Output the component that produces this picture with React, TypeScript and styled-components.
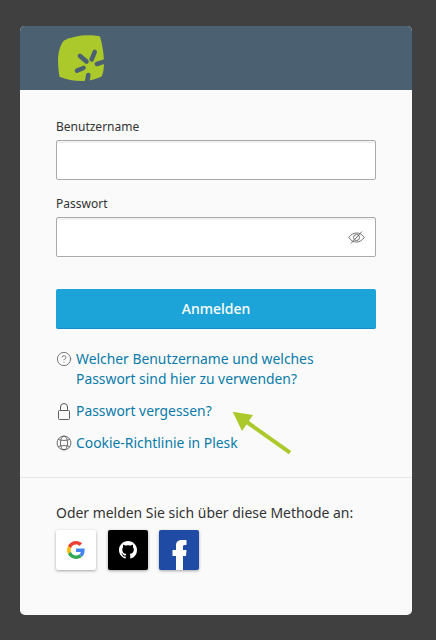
import React from 'react';
import styled, { createGlobalStyle } from 'styled-components';
import { CircleHelp } from 'lucide-react';

const GlobalStyle = createGlobalStyle`
  html, body {
    margin: 0;
    padding: 0;
    background: #404040;
  }
  * {
    box-sizing: border-box;
  }
`;

const Page = styled.div`
  width: 436px;
  height: 640px;
  padding: 26px 24px 25px 20px;
  font-family: "Noto Sans", "Open Sans", sans-serif;
  overflow: hidden;
`;

const Card = styled.div`
  position: relative;
  width: 392px;
  height: 589px;
  background: #fafafa;
  border-radius: 5px;
  overflow: hidden;
`;

const Header = styled.div`
  height: 64px;
  background: #4b6172;
  padding: 9px 0 0 38px;
`;

const Form = styled.form`
  padding: 28px 36px 0;
  display: flex;
  flex-direction: column;
`;

const Field = styled.div`
  margin-bottom: 15px;
`;

const Label = styled.label`
  display: block;
  font-size: 12px;
  line-height: 18px;
  height: 22px;
  color: #333;
`;

const InputBox = styled.div`
  position: relative;
  height: 40px;
  background: #fff;
  border: 1px solid #aaa;
  border-radius: 2px;
  box-shadow: inset 0 2px 0 rgba(0, 0, 0, 0.05);
`;

const EyeButton = styled.span`
  position: absolute;
  top: 13px;
  right: 10px;
  display: flex;
`;

const Submit = styled.button`
  height: 40px;
  margin-top: 17px;
  border: 0;
  border-bottom: 1px solid #1690c4;
  border-radius: 2px;
  background: #1ca4d8;
  color: #fff;
  font-family: inherit;
  font-size: 14px;
  font-weight: 500;
`;

const Links = styled.div`
  margin-top: 20px;
  display: flex;
  flex-direction: column;
  gap: 12px;
`;

const LinkRow = styled.div`
  display: flex;
  gap: 4px;
  font-size: 13.88px;
  line-height: 20px;
`;

const LinkIcon = styled.span`
  flex: none;
  width: 16px;
  height: 20px;
  display: flex;
  align-items: center;
  justify-content: center;
  color: #5c5c5c;
`;

const LinkText = styled.a`
  color: #0a7ba8;
  text-decoration: none;
`;

const Footer = styled.div`
  margin-top: 24px;
  border-top: 1px solid #e6e6e6;
  padding: 25px 36px 0;
`;

const FooterText = styled.div`
  font-size: 13.95px;
  line-height: 20px;
  color: #333;
`;

const Socials = styled.div`
  display: flex;
  margin-top: 7px;
`;

const Social = styled.a<{ $bg: string; $gap: number }>`
  width: 40px;
  height: 40px;
  margin-right: ${(p) => p.$gap}px;
  background: ${(p) => p.$bg};
  border-radius: 2px;
  box-shadow: 0 1px 3px rgba(0, 0, 0, 0.35);
  display: flex;
  align-items: center;
  justify-content: center;
  overflow: hidden;
`;

const Arrow = styled.svg`
  position: absolute;
  left: 200px;
  top: 374px;
`;

const Logo = () => (
  <svg width="47" height="47" viewBox="0 0 47 47">
    <path
      d="M6 5.500 C13 2 22 0 33 0.300 C37 0.500 40 1 42 1.500 C44.500 10 46 20 46 28 C46 34 45 38 43.700 41.500 C38 44 32 46 24 46 C16 46 8 44.500 1.500 41.700 C0.500 36 0 30 0 25 C0 18 2 10 6 5.500 Z"
      fill="#acc92c"
    />
    <g stroke="#4b6172" strokeWidth="4.600" strokeLinecap="round" fill="none">
      <line x1="22" y1="21" x2="28.500" y2="26.500" />
      <line x1="36.700" y1="17" x2="33.700" y2="24.300" />
      <line x1="39" y1="29" x2="50" y2="25.500" />
      <line x1="19" y1="35.700" x2="25.500" y2="33" />
      <line x1="30.300" y1="40" x2="28.500" y2="50" />
    </g>
  </svg>
);

const EyeSlash = () => (
  <svg width="17" height="13" viewBox="0 0 17 13" fill="none" stroke="#6f6f6f" strokeWidth="1">
    <path d="M0.800 6.500 C3 3.300 5.500 2 8.500 2 C11.500 2 14 3.300 16.200 6.500 C14 9.700 11.500 11 8.500 11 C5.500 11 3 9.700 0.800 6.500 Z" />
    <circle cx="8.500" cy="6.500" r="3" />
    <line x1="14" y1="0.500" x2="3" y2="12.500" />
  </svg>
);

const Padlock = () => (
  <svg width="16" height="20" viewBox="0 0 16 20" fill="none" stroke="currentColor" strokeWidth="1">
    <rect x="2.500" y="9.500" width="11" height="9" rx="1" />
    <path d="M4.500 9.500 V6 a3.500 3.500 0 0 1 7 0 V9.500" />
  </svg>
);

const Globe = () => (
  <svg width="18" height="18" viewBox="0 0 18 18" fill="none" stroke="currentColor" strokeWidth="1">
    <circle cx="9" cy="9" r="7.800" />
    <ellipse cx="9" cy="9" rx="4" ry="7.800" />
    <path d="M2.500 5 C6 6.500 12 6.500 15.500 5 M2.500 13 C6 11.500 12 11.500 15.500 13" />
  </svg>
);

const Google = () => (
  <svg width="18" height="18" viewBox="0 0 48 48">
    <path fill="#EA4335" d="M24 9.500c3.540 0 6.710 1.220 9.210 3.600l6.850-6.850C35.900 2.380 30.470 0 24 0 14.620 0 6.510 5.380 2.560 13.220l7.980 6.190C12.430 13.720 17.740 9.500 24 9.500z" />
    <path fill="#4285F4" d="M46.980 24.550c0-1.570-.15-3.090-.38-4.550H24v9.020h12.940c-.58 2.960-2.260 5.480-4.780 7.180l7.730 6c4.510-4.180 7.090-10.360 7.090-17.650z" />
    <path fill="#FBBC05" d="M10.530 28.590c-.48-1.450-.76-2.990-.76-4.590s.27-3.140.76-4.590l-7.980-6.190C.92 16.460 0 20.120 0 24c0 3.880.92 7.540 2.560 10.780l7.970-6.190z" />
    <path fill="#34A853" d="M24 48c6.480 0 11.930-2.130 15.890-5.810l-7.730-6c-2.150 1.450-4.920 2.300-8.160 2.300-6.260 0-11.570-4.220-13.470-9.910l-7.980 6.190C6.510 42.620 14.620 48 24 48z" />
  </svg>
);

const Github = () => (
  <svg width="18" height="18" viewBox="0 0 16 16" fill="#fff">
    <path d="M8 0C3.580 0 0 3.580 0 8c0 3.540 2.290 6.530 5.470 7.590.4.070.55-.17.55-.38 0-.19-.01-.82-.01-1.490-2.010.37-2.530-.49-2.690-.94-.09-.23-.48-.94-.82-1.130-.28-.15-.68-.52-.01-.53.630-.01 1.080.58 1.230.82.720 1.210 1.870.87 2.330.66.070-.52.280-.87.510-1.070-1.780-.2-3.640-.89-3.640-3.950 0-.87.310-1.590.82-2.150-.08-.2-.36-1.020.08-2.120 0 0 .67-.21 2.200.82.640-.18 1.320-.27 2-.27s1.360.09 2 .27c1.530-1.040 2.200-.82 2.200-.82.440 1.100.16 1.920.08 2.120.51.560.82 1.270.82 2.150 0 3.070-1.870 3.750-3.650 3.950.29.250.54.730.54 1.480 0 1.070-.01 1.930-.01 2.200 0 .21.150.46.550.38A8.013 8.013 0 0 0 16 8c0-4.420-3.580-8-8-8z" />
  </svg>
);

const Facebook = () => (
  <svg width="40" height="40" viewBox="0 0 40 40">
    <path
      fill="#fff"
      d="M17 40 V26 H13.500 V20 H17 V15.500 C17 11.500 19.500 10 23 10 H27.500 V15 H25.500 C24.200 15 24 15.700 24 17 V20 H27.500 L27 26 H24 V40 Z"
    />
  </svg>
);

const App: React.FC = () => {
  return (
    <>
      <GlobalStyle />
      <Page>
        <Card>
          <Header>
            <Logo />
          </Header>
          <Form>
            <Field>
              <Label>Benutzername</Label>
              <InputBox />
            </Field>
            <Field>
              <Label>Passwort</Label>
              <InputBox>
                <EyeButton>
                  <EyeSlash />
                </EyeButton>
              </InputBox>
            </Field>
            <Submit type="button">Anmelden</Submit>
            <Links>
              <LinkRow>
                <LinkIcon>
                  <CircleHelp size={18} strokeWidth={1.2} />
                </LinkIcon>
                <LinkText>
                  Welcher Benutzername und welches
                  <br />
                  Passwort sind hier zu verwenden?
                </LinkText>
              </LinkRow>
              <LinkRow>
                <LinkIcon>
                  <Padlock />
                </LinkIcon>
                <LinkText>Passwort vergessen?</LinkText>
              </LinkRow>
              <LinkRow>
                <LinkIcon>
                  <Globe />
                </LinkIcon>
                <LinkText>Cookie-Richtlinie in Plesk</LinkText>
              </LinkRow>
            </Links>
          </Form>
          <Footer>
            <FooterText>Oder melden Sie sich über diese Methode an:</FooterText>
            <Socials>
              <Social $bg="#fff" $gap={12}>
                <Google />
              </Social>
              <Social $bg="#000" $gap={11}>
                <Github />
              </Social>
              <Social $bg="#1f4ba5" $gap={0}>
                <Facebook />
              </Social>
            </Socials>
          </Footer>
          <Arrow width="80" height="60" viewBox="0 0 80 60">
            <line x1="70" y1="52.700" x2="24" y2="20" stroke="#acc92c" strokeWidth="4" />
            <polygon points="12.700,11.700 33,15 22,31" fill="#acc92c" />
          </Arrow>
        </Card>
      </Page>
    </>
  );
};

export default App;
